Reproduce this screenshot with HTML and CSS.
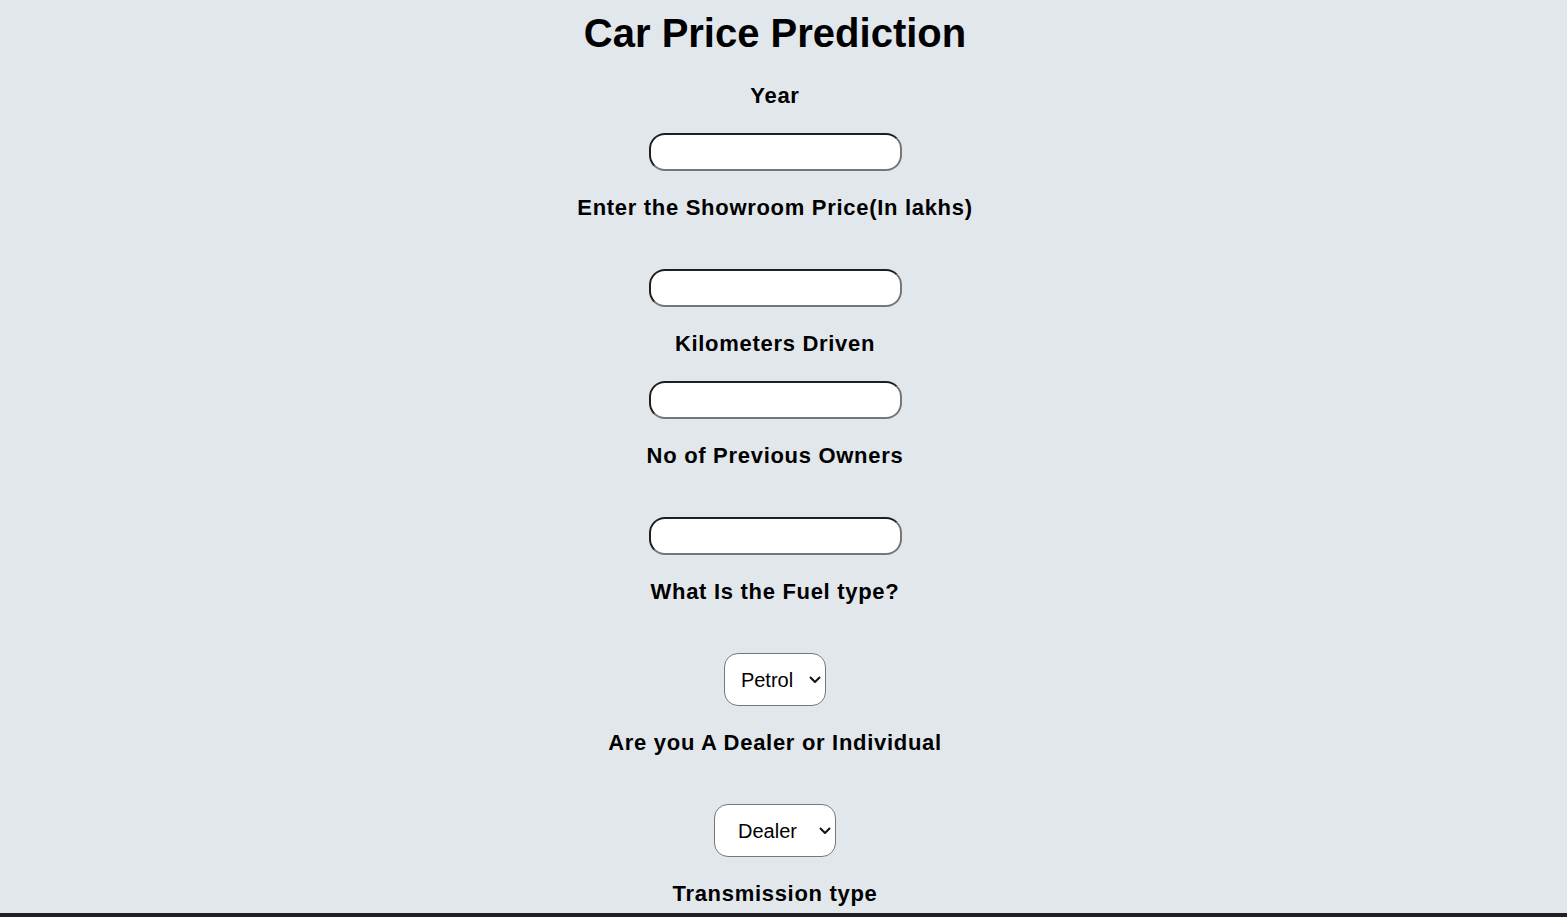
FILE: index.html
```html
<!DOCTYPE html>
<html lang="en">
<head>
<meta charset="utf-8">
<title>Car Price Prediction</title>
<link rel="stylesheet" href="styles.css">
</head>
<body>
<main class="page">
  <h1 class="title">Car Price Prediction</h1>
  <form class="form">
    <label class="field-label" for="year">Year</label>
    <input class="text-input" id="year" type="text">

    <label class="field-label field-label--tall" for="price">Enter the Showroom Price(In lakhs)</label>
    <input class="text-input" id="price" type="text">

    <label class="field-label" for="kms">Kilometers Driven</label>
    <input class="text-input" id="kms" type="text">

    <label class="field-label field-label--tall" for="owners">No of Previous Owners</label>
    <input class="text-input" id="owners" type="text">

    <label class="field-label field-label--tall" for="fuel">What Is the Fuel type?</label>
    <div class="select-wrap">
      <select class="select select--fuel" id="fuel">
        <option>Petrol</option>
        <option>Diesel</option>
        <option>CNG</option>
      </select>
      <svg class="chevron" width="12" height="7" viewBox="0 0 12 7" aria-hidden="true"><polyline points="1,1 6,6 11,1" fill="none" stroke="#111" stroke-width="2"/></svg>
    </div>

    <label class="field-label field-label--tall" for="seller">Are you A Dealer or Individual</label>
    <div class="select-wrap">
      <select class="select select--seller" id="seller">
        <option>Dealer</option>
        <option>Individual</option>
      </select>
      <svg class="chevron" width="12" height="7" viewBox="0 0 12 7" aria-hidden="true"><polyline points="1,1 6,6 11,1" fill="none" stroke="#111" stroke-width="2"/></svg>
    </div>

    <label class="field-label" for="trans">Transmission type</label>
    <div class="select-wrap">
      <select class="select select--seller" id="trans">
        <option>Manual</option>
        <option>Automatic</option>
      </select>
      <svg class="chevron" width="12" height="7" viewBox="0 0 12 7" aria-hidden="true"><polyline points="1,1 6,6 11,1" fill="none" stroke="#111" stroke-width="2"/></svg>
    </div>
  </form>
</main>
<div class="bottom-bar"></div>
</body>
</html>
```

FILE: styles.css
```css
html, body {
  margin: 0;
  padding: 0;
}

body {
  background: #e2e7ec;
  color: #000;
  font-family: "Liberation Sans", Arial, sans-serif;
}

.page {
  display: flex;
  flex-direction: column;
  align-items: center;
  margin-right: 17px;
}

.title {
  font-size: 40px;
  font-weight: bold;
  line-height: 46px;
  margin: 10px 0 0 0;
  text-align: center;
}

.form {
  display: flex;
  flex-direction: column;
  align-items: center;
}

.field-label {
  display: block;
  font-size: 22px;
  font-weight: bold;
  letter-spacing: 0.7px;
  line-height: 26px;
  margin: 24px 0 24px 0;
  text-align: center;
}

.field-label:first-child {
  margin-top: 27px;
}

.field-label--tall {
  margin-bottom: 48px;
}

.text-input {
  box-sizing: border-box;
  width: 253px;
  height: 38px;
  margin: 0;
  padding: 0 12px;
  background: #fff;
  border: 2px solid;
  border-color: #1f1f1f #767676 #767676 #1f1f1f;
  border-radius: 16px;
  font-family: "Liberation Sans", Arial, sans-serif;
  font-size: 18px;
}

.select-wrap {
  position: relative;
  display: flex;
}

.select {
  -webkit-appearance: none;
  appearance: none;
  box-sizing: border-box;
  height: 53px;
  margin: 0;
  padding: 0 16px 0 0;
  background: #fff;
  border: 1px solid #767676;
  border-radius: 14px;
  font-family: "Liberation Sans", Arial, sans-serif;
  font-size: 20px;
  color: #000;
  text-align: center;
  text-align-last: center;
}

.select--fuel {
  width: 102px;
}

.select--seller {
  width: 122px;
  padding-right: 15px;
}

.chevron {
  position: absolute;
  right: 5px;
  top: 23px;
  pointer-events: none;
}

.bottom-bar {
  position: fixed;
  left: 0;
  right: 0;
  bottom: 0;
  height: 4px;
  background: #202124;
}
```
